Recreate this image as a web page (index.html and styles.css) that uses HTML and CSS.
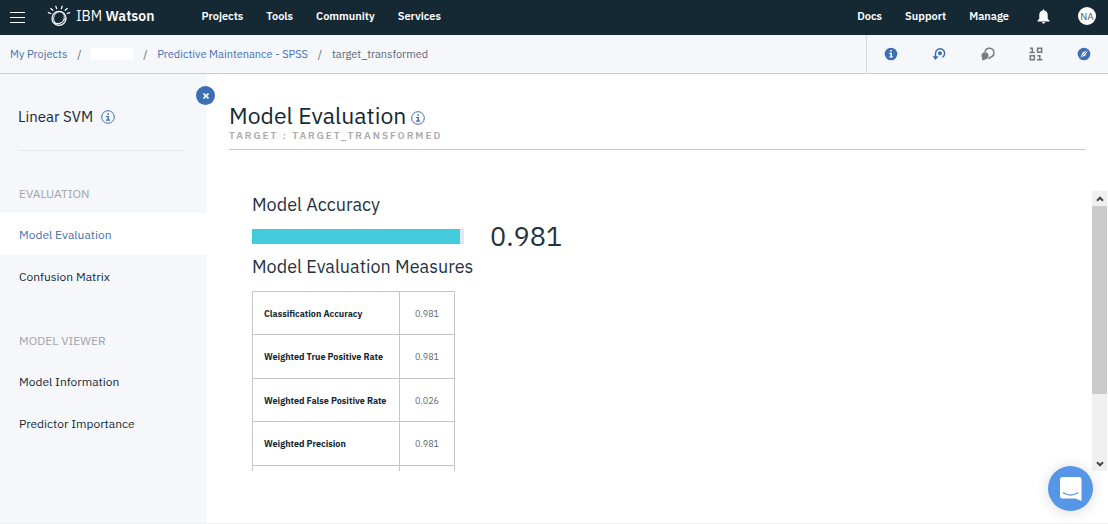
FILE: index.html
```html
<!DOCTYPE html>
<html lang="en">
<head>
<meta charset="utf-8">
<meta name="viewport" content="width=device-width, initial-scale=1">
<title>IBM Watson</title>
<link rel="stylesheet" href="styles.css">
</head>
<body>
<svg class="defs" aria-hidden="true">
  <symbol id="info" viewBox="0 0 14 14">
    <circle cx="7" cy="7" r="6.3" fill="none" stroke="currentColor"/>
    <path d="M6.3 3.3h1.6v1.5H6.3zM5 6h2.9v3.6h1.2v1.1H5V9.600h1.400V7.100H5z" fill="currentColor"/>
  </symbol>
</svg>
<header class="topbar">
  <button class="menu" aria-label="Menu"><span></span><span></span><span></span></button>
  <a class="brand" href="#">
    <svg class="logo" viewBox="0 0 24 22" fill="none" stroke="currentColor" stroke-linecap="round" aria-hidden="true">
      <path d="M8.800 1.200l.9 2.500M15.200 1.200l-.9 2.500M3.800 3.500l2 1.800M20.200 3.500l-2 1.800M1.300 7.600l2.500.9M22.700 7.600l-2.500.9" stroke-width="1.200"/>
      <circle cx="12" cy="13.300" r="7" stroke-width="1.300"/>
      <ellipse cx="12" cy="12.800" rx="5.200" ry="6.300" transform="rotate(25 12 12.800)" stroke-width=".8"/>
      <path d="M5.600 17c4.500 3 10.500 1.500 12.600-3.500" stroke-width=".9"/>
    </svg>
    <span>IBM <b>Watson</b></span>
  </a>
  <nav class="nav" aria-label="Main">
    <a href="#">Projects</a><a href="#">Tools</a><a href="#">Community</a><a href="#">Services</a>
  </nav>
  <nav class="nav nav-right" aria-label="Help and account">
    <a href="#">Docs</a><a href="#">Support</a><a href="#">Manage</a>
  </nav>
  <button class="bell" aria-label="Notifications">
    <svg viewBox="0 0 12 15" fill="currentColor" aria-hidden="true"><path d="M5.300.4h1.400v1c2.300.4 3.500 2 3.500 4.500v3.800l1.700 1.900v.8H.1v-.8l1.700-1.900V5.900c0-2.500 1.200-4.100 3.500-4.500zM4.600 13h2.800c0 2-2.800 2-2.800 0z"/></svg>
  </button>
  <button class="avatar">NA</button>
</header>

<div class="subbar">
  <nav class="crumbs" aria-label="Breadcrumb">
    <a href="#">My Projects</a><i>/</i><a class="blank" href="#" aria-label="Project"></a><i>/</i><a href="#">Predictive Maintenance - SPSS</a><i>/</i><span>target_transformed</span>
  </nav>
  <div class="tools">
    <button aria-label="Information"><svg viewBox="0 0 14 14" aria-hidden="true"><circle cx="7" cy="7" r="6.300" fill="currentColor"/><path d="M6.200 3h1.700v1.600H6.200zM5.300 5.700h2.600v3.700H9v1.200H5.200V9.400h1.200V6.900H5.300z" fill="#fff"/></svg></button>
    <button aria-label="Versions"><svg viewBox="0 0 14 14" aria-hidden="true"><path d="M3.500 11V6.300a4.600 4.600 0 1 1 6.900 4" fill="none" stroke="currentColor" stroke-width="1.500"/><path d="M.5 9.300h6L3.500 13z" fill="currentColor"/><circle cx="8" cy="6.200" r="2" fill="currentColor"/></svg></button>
    <button class="muted" aria-label="Comments"><svg viewBox="0 0 14 14" aria-hidden="true"><path d="M4 4.800a4.500 4.500 0 1 1 5.200 5.400L7.800 12" fill="none" stroke="currentColor" stroke-width="1.500"/><circle cx="4" cy="8.800" r="3.500" fill="currentColor"/><path d="M1.200 10.200v3.300l3.500-1z" fill="currentColor"/></svg></button>
    <button class="muted" aria-label="Data"><svg viewBox="0 0 14 14" fill="none" stroke="currentColor" stroke-width="1.600" aria-hidden="true"><path d="M1 1.300h2.300v4M.5 5.500h5.300M8.600 1.300h4v4h-4zM1.300 8.700h4v4h-4zM8.500 8.700h2.300v4M8 12.800h5.500"/></svg></button>
    <button aria-label="Explore"><svg viewBox="0 0 14 14" aria-hidden="true"><circle cx="7" cy="7" r="6.300" fill="currentColor"/><path d="M10.800 3.200L8.300 8.400 3.200 10.800l2.500-5.200z" fill="#fff"/><path d="M3.200 10.800l7.600-7.600" stroke="currentColor" stroke-width=".8"/></svg></button>
  </div>
</div>

<div class="page">
  <aside class="sidebar">
    <button class="close" aria-label="Close panel"><svg viewBox="0 0 6 6" aria-hidden="true"><path d="M.5.5l5 5M5.500.5l-5 5" stroke="#fff" stroke-width="1.600"/></svg></button>
    <div class="model">Linear SVM <button class="info" aria-label="About Linear SVM"><svg><use href="#info"/></svg></button></div>
    <nav aria-label="Model sections">
      <h2>EVALUATION</h2>
      <a class="active" href="#" aria-current="page">Model Evaluation</a>
      <a href="#">Confusion Matrix</a>
      <h2>MODEL VIEWER</h2>
      <a href="#">Model Information</a>
      <a href="#">Predictor Importance</a>
    </nav>
  </aside>
  <main class="main">
    <div class="title">
      <h1>Model Evaluation <button class="info" aria-label="About model evaluation"><svg><use href="#info"/></svg></button></h1>
      <p>TARGET : TARGET_TRANSFORMED</p>
    </div>
    <div class="viewport">
      <div class="content">
        <h3>Model Accuracy</h3>
        <div class="accuracy">
          <div class="track"><div class="fill" style="width:98.1%"></div></div>
          <output>0.981</output>
        </div>
        <h3>Model Evaluation Measures</h3>
        <table>
          <tbody>
            <tr><th scope="row">Classification Accuracy</th><td>0.981</td></tr>
            <tr><th scope="row">Weighted True Positive Rate</th><td>0.981</td></tr>
            <tr><th scope="row">Weighted False Positive Rate</th><td>0.026</td></tr>
            <tr><th scope="row">Weighted Precision</th><td>0.981</td></tr>
            <tr aria-hidden="true"><td></td><td></td></tr>
          </tbody>
        </table>
      </div>
      <div class="scrollbar">
        <button aria-label="Scroll up"><svg viewBox="0 0 8 6"><path d="M1 4.700l3-3 3 3"/></svg></button>
        <div class="thumb"></div>
        <button class="down" aria-label="Scroll down"><svg viewBox="0 0 8 6"><path d="M1 1.300l3 3 3-3"/></svg></button>
      </div>
    </div>
  </main>
</div>
<button class="chat" aria-label="Open chat">
  <svg viewBox="0 0 22 24" aria-hidden="true"><path d="M2.500 0h16.500q2.500 0 2.500 2.500V24l-6-2.500h-13Q0 21.500 0 19V2.500Q0 0 2.500 0z" fill="#fff"/><path d="M3.500 15.800q7.200 4.600 14.500 0" fill="none" stroke="#5596e6" stroke-width="1.300" stroke-linecap="round"/></svg>
</button>
</body>
</html>
```
FILE: styles.css
```css
* { box-sizing: border-box; }
body {
  margin: 0;
  min-height: 100vh;
  display: flex;
  flex-direction: column;
  font-family: "IBM Plex Sans", Roboto, sans-serif;
  font-size: 11px;
  color: #152935;
  background: #fff;
}
a { color: inherit; text-decoration: none; }
button { padding: 0; border: 0; background: none; color: inherit; font: inherit; cursor: pointer; }
svg { display: block; }
h1, h2, h3, p { margin: 0; font-weight: 400; }
.defs { position: absolute; width: 0; height: 0; }

.topbar {
  display: flex;
  align-items: center;
  height: 35px;
  flex: none;
  padding: 0 12px 3px 10px;
  background: #152935;
  color: #fff;
}
.menu { display: flex; flex-direction: column; gap: 4px; width: 15px; margin-top: 2px; }
.menu span { height: 1px; background: #fff; }
.brand { display: flex; align-items: center; gap: 5px; margin-left: 22px; font-size: 14px; }
.brand b { font-weight: 600; }
.logo { width: 24px; height: 22px; }
.nav { display: flex; gap: 23px; margin-left: 47px; font-weight: 600; }
.nav-right { margin-left: auto; }
.bell { margin-left: 28px; }
.bell svg { width: 13px; height: 15px; }
.avatar {
  width: 18px;
  height: 18px;
  margin-left: 28px;
  border-radius: 50%;
  background: #fff;
  color: #4c5a63;
  font-size: 10px;
}

.subbar {
  display: flex;
  align-items: stretch;
  height: 39px;
  flex: none;
  border-bottom: 1px solid #c9cdd4;
  background: #f5f7fb;
}
.crumbs { display: flex; align-items: center; flex: 1; padding-left: 10px; color: #5a6872; }
.crumbs a { color: #4470b0; }
.crumbs i { width: 24px; text-align: center; font-style: normal; }
.crumbs .blank { width: 42px; height: 12px; background: #fff; }
.tools {
  display: flex;
  align-items: center;
  justify-content: space-between;
  width: 242px;
  padding: 0 17px;
  border-left: 1px solid #d6dae0;
  color: #3d70b2;
}
.tools svg { width: 14px; height: 14px; }
.tools .muted { color: #777c80; }

.page { display: flex; flex: 1; min-height: 450px; border-bottom: 1px solid #f0f1f4; }
.sidebar {
  position: relative;
  width: 207px;
  flex: none;
  padding-top: 32px;
  background: #f5f7fb;
}
.close {
  position: absolute;
  top: 12px;
  right: -8px;
  display: grid;
  place-items: center;
  width: 19px;
  height: 19px;
  border-radius: 50%;
  background: #3d70b2;
}
.close svg { width: 6px; height: 6px; }
.model {
  display: flex;
  align-items: center;
  gap: 8px;
  height: 45px;
  margin: 0 23px 0 18px;
  padding-bottom: 23px;
  border-bottom: 1px solid #e4e7ec;
  font-size: 15px;
}
.info { color: #3d70b2; }
.info svg { width: 14px; height: 14px; }
.sidebar h2 { margin-top: 22px; padding: 2px 0 0 19px; color: #a0a4a8; font-size: 12px; line-height: 38px; }
.sidebar a + h2 { margin-top: 23px; }
.sidebar nav a { display: block; padding: 2px 0 0 19px; font-size: 12px; line-height: 40px; }
.sidebar .active { background: #fff; color: #4470b0; }

.main { display: flex; flex-direction: column; flex: 1; min-width: 0; padding: 28px 0 52px; }
.title { margin: 0 23px 41px 22px; padding-bottom: 7px; border-bottom: 1px solid #c8c8c8; }
.title h1 { display: flex; align-items: center; gap: 5px; font-size: 23px; line-height: 27px; }
.title h1 svg { margin-top: 4px; }
.title p { color: #aaa; font-size: 10px; font-weight: 600; line-height: 13px; letter-spacing: 2px; }
.viewport { display: flex; flex: 1 1 0; min-height: 0; overflow: hidden; }
.content { flex: 1; padding-left: 45px; color: #25333e; }
.content h3 { font-size: 18px; line-height: 28px; }
.accuracy { display: flex; align-items: center; gap: 26px; height: 34px; }
.track { width: 212px; height: 15px; background: #e3e8ef; }
.fill { height: 100%; background: #41cbdb; }
.accuracy output { font-size: 27px; line-height: 32px; }
table { margin-top: 10px; border-collapse: collapse; font-size: 9px; color: #152935; }
tr { height: 43px; }
tr:nth-child(even) { height: 44px; }
th, td { padding: 0 11px; border: 1px solid #c6c6c6; text-align: left; }
th { width: 147px; font-weight: 700; white-space: nowrap; }
td { color: #606870; text-align: center; }
td:last-child { width: 55px; }
.scrollbar { display: flex; flex-direction: column; width: 15px; margin-right: 1px; background: #f0f0f0; }
.scrollbar button { display: grid; place-items: center; height: 15px; flex: none; }
.scrollbar svg { width: 8px; height: 6px; fill: none; stroke: #444; stroke-width: 2; }
.thumb { height: 67%; background: #cbcbcb; }
.scrollbar .down { margin-top: auto; }

.chat {
  position: fixed;
  right: 15px;
  bottom: 13px;
  display: grid;
  place-items: center;
  width: 45px;
  height: 45px;
  border-radius: 50%;
  background: #5596e6;
  box-shadow: 0 1px 14px rgba(0, 0, 0, .15);
}
.chat svg { width: 22px; height: 24px; }
```
